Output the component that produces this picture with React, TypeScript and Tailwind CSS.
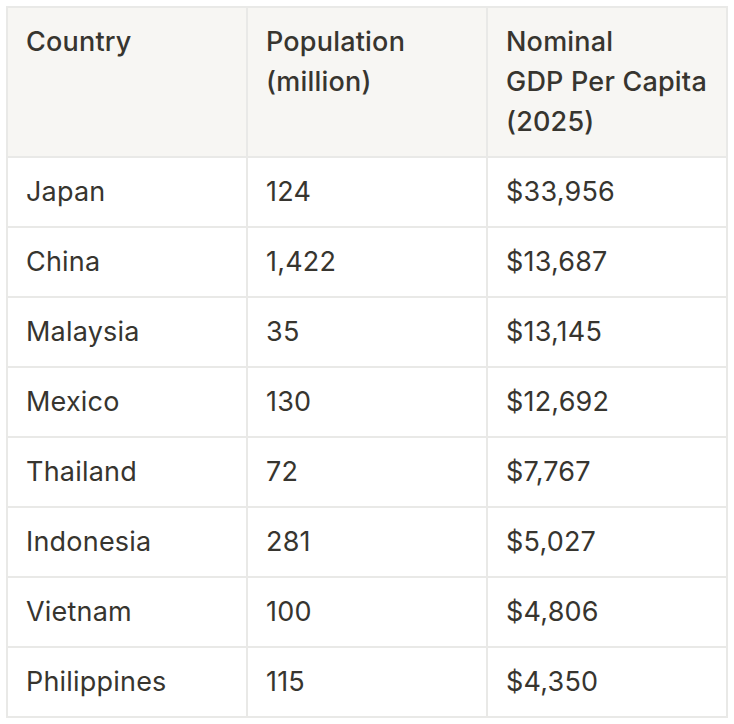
import React from "react";

const rows: [string, string, string][] = [
  ["Japan", "124", "$33,956"],
  ["China", "1,422", "$13,687"],
  ["Malaysia", "35", "$13,145"],
  ["Mexico", "130", "$12,692"],
  ["Thailand", "72", "$7,767"],
  ["Indonesia", "281", "$5,027"],
  ["Vietnam", "100", "$4,806"],
  ["Philippines", "115", "$4,350"],
];

export default function App() {
  return (
    <div className="w-[734px] h-[724px] bg-white pt-[6px] pl-[6px]" style={{ fontFamily: "Inter, 'Noto Sans', sans-serif" }}>
      <table className="border-collapse text-[#37352f] text-[27px] leading-[40px] tracking-[0.2px]">
        <thead>
          <tr className="bg-[#f7f6f3]">
            <th className="w-[240px] h-[150px] border-2 border-[#e9e9e7] align-top text-left font-medium pt-[14px] px-[18px]">Country</th>
            <th className="w-[240px] border-2 border-[#e9e9e7] align-top text-left font-medium pt-[14px] px-[18px]">Population<br />(million)</th>
            <th className="w-[240px] border-2 border-[#e9e9e7] align-top text-left font-medium pt-[14px] px-[18px]">Nominal<br />GDP Per Capita<br />(2025)</th>
          </tr>
        </thead>
        <tbody>
          {rows.map((r) => (
            <tr key={r[0]}>
              {r.map((c, i) => (
                <td key={i} className="h-[70px] border-2 border-[#e9e9e7] align-top text-left font-normal pt-[14px] px-[18px]">{c}</td>
              ))}
            </tr>
          ))}
        </tbody>
      </table>
    </div>
  );
}
